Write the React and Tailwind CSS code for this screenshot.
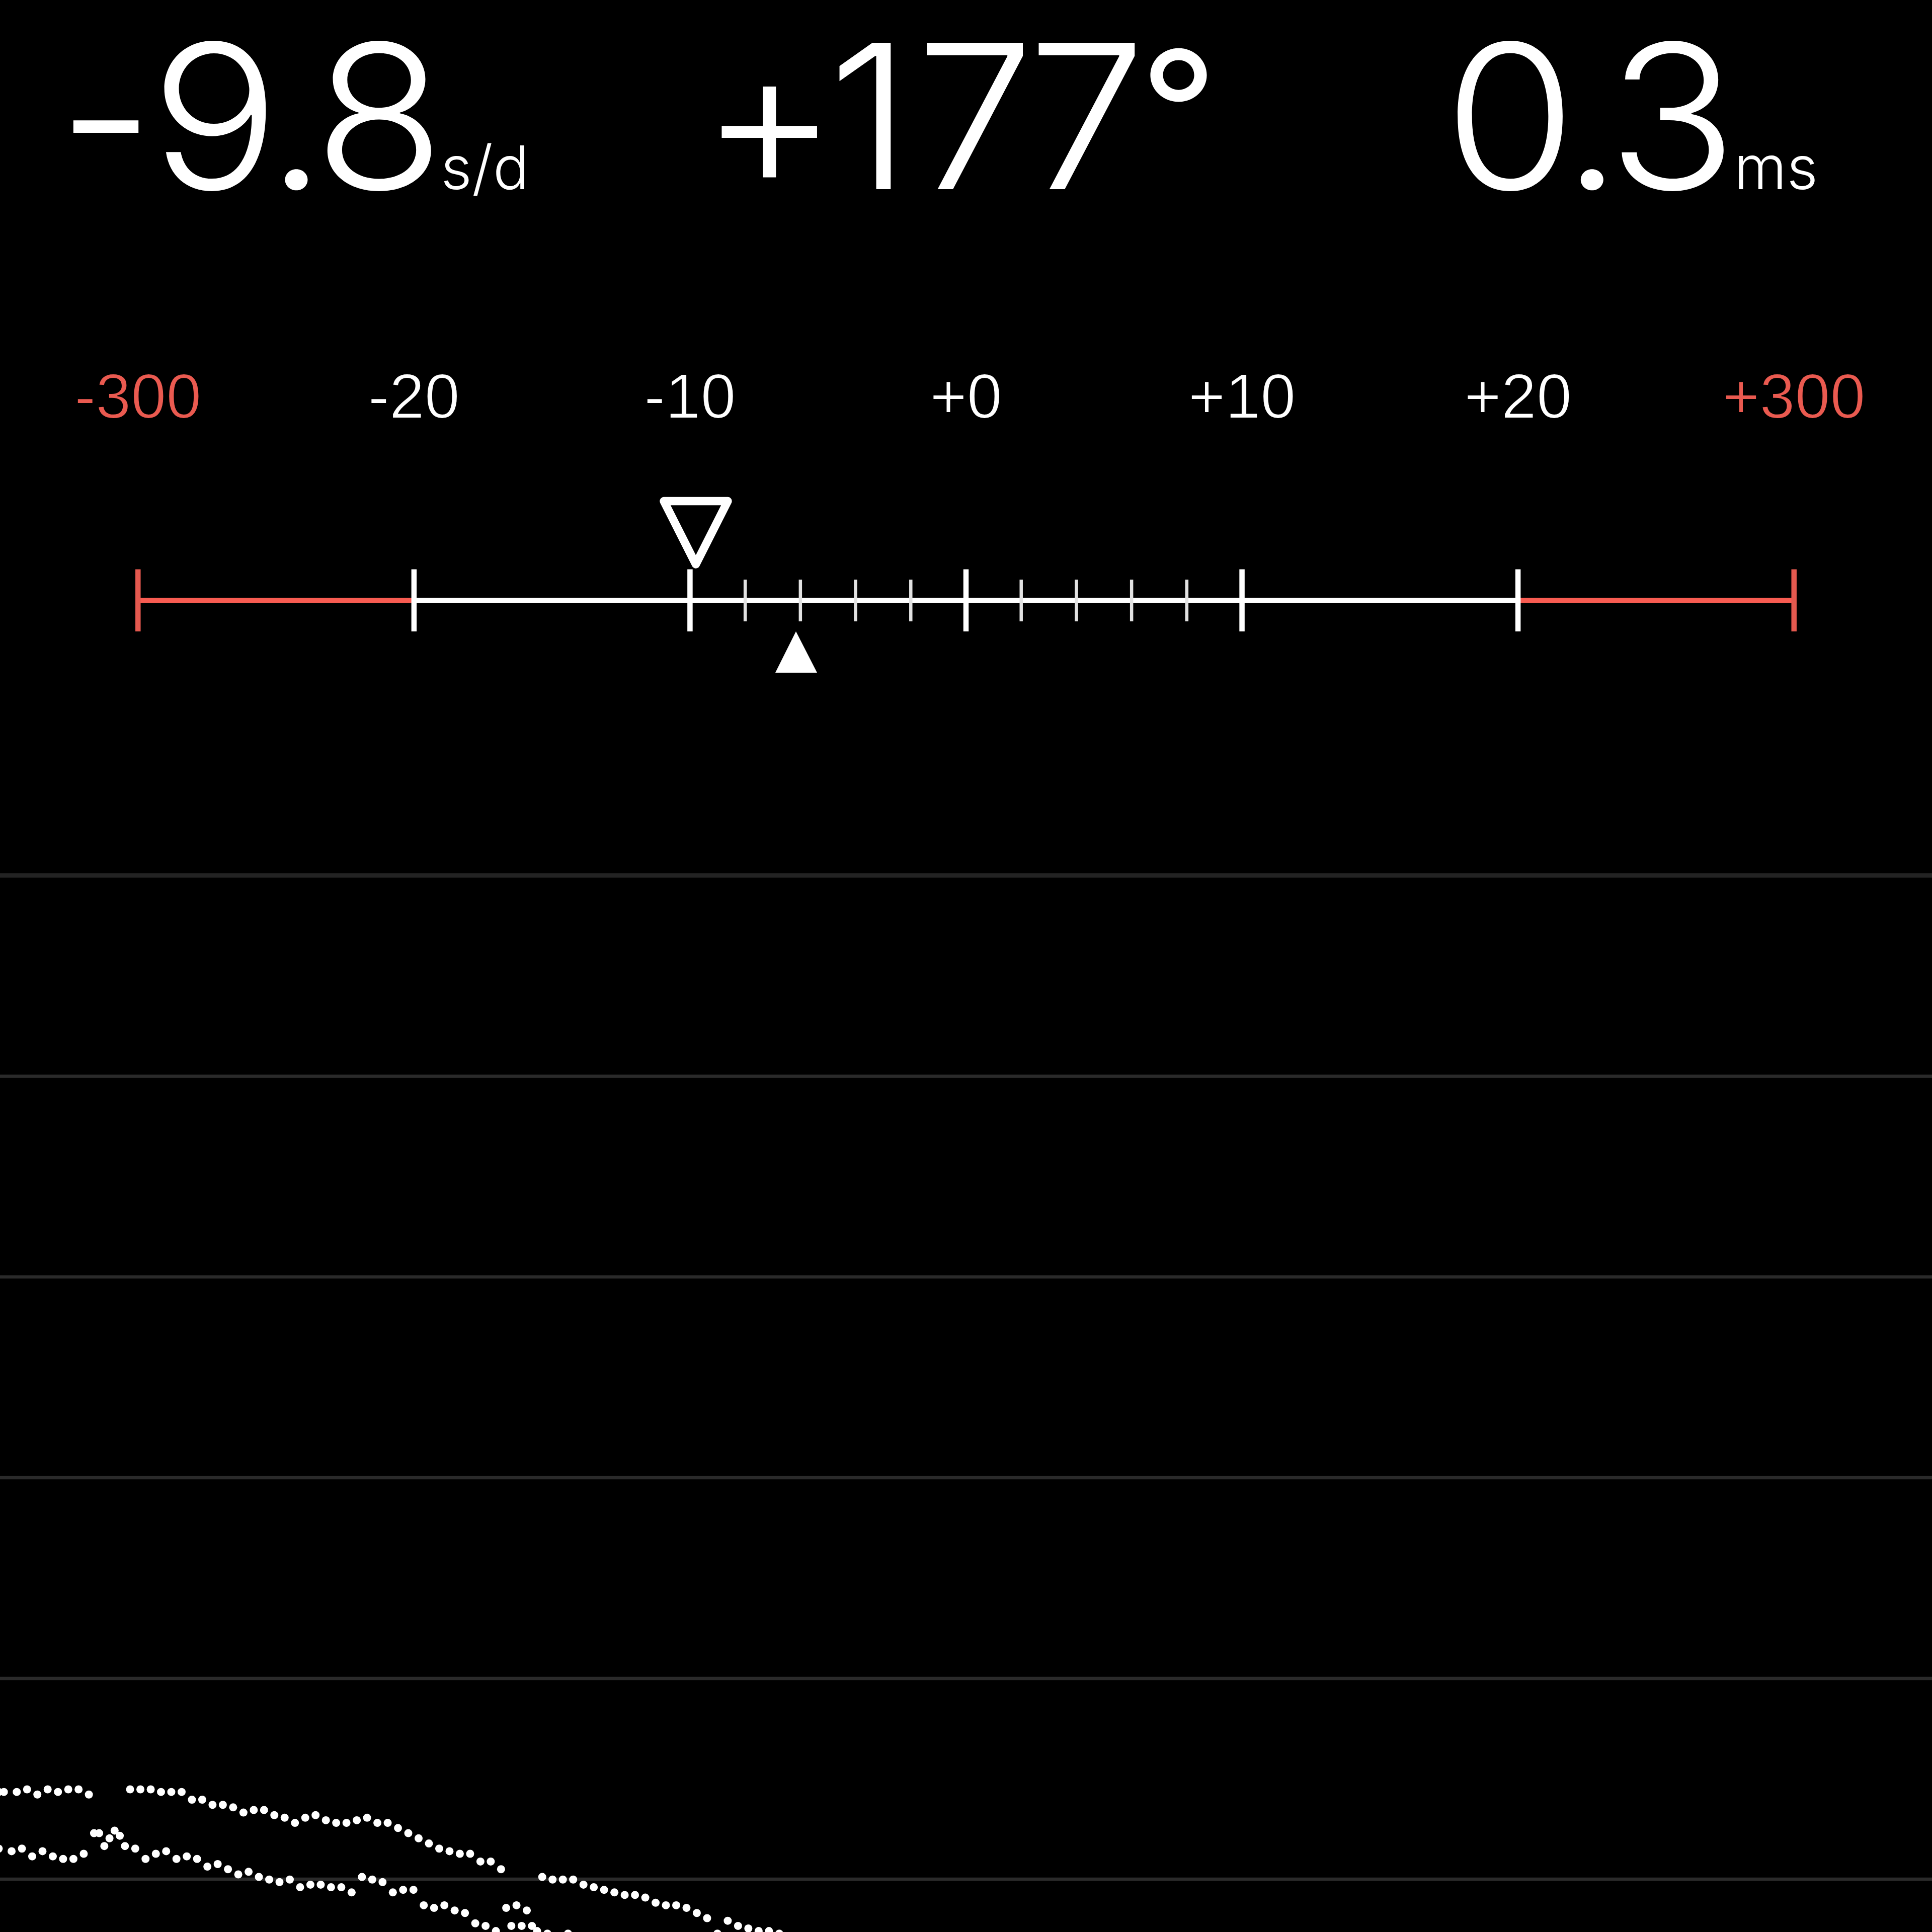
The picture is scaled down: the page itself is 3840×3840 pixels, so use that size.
import React from 'react';

// Values are split where the letter spacing changes
const READOUTS = [
  {
    id: 'rate',
    parts: [
      { text: '-', className: 'tracking-[-7px]' },
      { text: '9.8', className: 'tracking-[-15px]' },
    ],
    unit: 's/d',
    className: 'w-[1320px] pl-[114px]',
    valueClass: 'scale-x-[1.065]',
    unitClass: 'ml-[54px]',
  },
  {
    id: 'amplitude',
    parts: [
      { text: '+', className: 'tracking-[-20px]' },
      { text: '1', className: 'tracking-[9px]' },
      { text: '77', className: 'tracking-[-20px]' },
      { text: '°', className: 'text-[325px] leading-none font-normal align-[42px] ml-[8px]' },
    ],
    className: 'w-[1550px] pl-[72px]',
    valueClass: 'scale-x-[1.05]',
  },
  {
    id: 'beat',
    parts: [{ text: '0.3', className: 'tracking-[-17px]' }],
    unit: 'ms',
    className: 'w-[970px]',
    valueClass: 'scale-x-[1.065]',
    unitClass: 'ml-[46px]',
  },
];

const SCALE = [
  { label: '-300', limit: true },
  { label: '-20' },
  { label: '-10' },
  { label: '+0' },
  { label: '+10' },
  { label: '+20' },
  { label: '+300', limit: true },
];

// Distance between two major ticks
const STEP = 3840 / 7;
const RED = '#f85c52';

const GRID_LINES = [0, 1, 2, 3, 4, 5];

// Each run is [first x, step, list of y], counted in trace cells
const TRACE = [
  // tick
  [-0.5, 2, [12, 12]],
  [6.5, 4, [12, 11, 13, 11, 12, 11, 11, 13]],
  [50.5, 4, [11, 11, 11, 12, 12, 12, 15, 15, 17, 17, 18, 20, 19, 19, 21, 22, 24, 22, 21, 23, 24, 24, 23, 22, 24, 24, 26]],
  [158.5, 4, [28, 30, 32, 34, 35, 36, 36, 39, 39, 42]],
  [210.5, 4, [45, 46, 46, 46, 48, 49, 50, 51, 52, 52, 53, 55, 56, 56, 57, 59, 61, 67]],
  [282.5, 4, [62, 64, 65, 66, 66, 67]],
  // tock
  [-0.5, 5, [34]],
  [4.5, 4, [35, 34, 37, 35, 37, 38, 38, 36]],
  [36.5, 2, [28, 28, 33, 30, 27, 29, 33]],
  [52.5, 4, [34, 38, 36, 35, 38, 37, 38, 41, 40, 42, 44, 43, 45, 46, 47, 46, 49, 48, 48, 49, 49, 51]],
  [140.5, 4, [45, 46, 47, 51, 50, 50, 56, 57, 56, 58, 59, 63, 64, 66]],
  [196.5, 4, [57, 56, 58]],
  [198.5, 4, [64, 64, 64]],
  [208.5, 4, [66, 67]],
  [220.5, 4, [67]],
];

function Readout({ parts, unit, className, valueClass, unitClass }) {
  return (
    <div className={`flex items-baseline whitespace-nowrap ${className}`}>
      <span className={`inline-block origin-left text-[400px] leading-[460px] font-light [font-feature-settings:'calt'_0] ${valueClass}`}>
        {parts.map((part) => (
          <span key={part.text} className={part.className}>{part.text}</span>
        ))}
      </span>
      {unit && <span className={`text-[120px] leading-none font-light ${unitClass}`}>{unit}</span>}
    </div>
  );
}

function RateScale() {
  const center = (i) => STEP * (i + 0.5);
  const minor = [1, 2, 3, 4, 6, 7, 8, 9];

  return (
    <svg className="block w-[3840px] h-[400px]" viewBox="0 960 3840 400">
      {/* base line */}
      <path d={`M${center(0)} 1193.2H${center(1)}M${center(5)} 1193.2H${center(6)}`} stroke={RED} strokeWidth="10.5" />
      <path d={`M${center(1)} 1193.2H${center(5)}`} stroke="#fff" strokeWidth="10.5" />

      {minor.map((i) => (
        <path key={i} d={`M${center(2) + (i * STEP) / 5} 1152V1235`} stroke="#e2e2e2" strokeWidth="6.5" />
      ))}
      {SCALE.map((tick, i) => (
        <path key={tick.label} d={`M${center(i)} 1131.5V1255`} stroke={tick.limit ? '#e4594f' : '#fff'} strokeWidth="10.5" />
      ))}

      {/* current rate and running average */}
      <path d="M1319.5 996H1446.5L1383 1121.5Z" fill="none" stroke="#fff" strokeWidth="16.4" strokeLinejoin="round" />
      <path d="M1582 1255L1624 1337H1541Z" fill="#fff" />
    </svg>
  );
}

function TracePlot() {
  return (
    <svg className="block w-[3840px] h-[2480px]" viewBox="0 1360 3840 2480">
      {GRID_LINES.map((i) => (
        <path
          key={i}
          d={`M0 ${1740 + i * 399}H3840`}
          stroke={i === 0 ? '#232323' : '#2a2a2a'}
          strokeWidth={i === 0 ? 9 : 6.5}
        />
      ))}
      {TRACE.map(([start, step, rows]) =>
        rows.map((row, i) => (
          <circle key={`${start}-${i}-${row}`} cx={(start + i * step) * 5.12} cy={3500.2 + row * 5.12} r="8" fill="#fff" />
        ))
      )}
    </svg>
  );
}

export default function App() {
  return (
    <div className="w-[3840px] h-[3840px] bg-black text-white font-['Inter',sans-serif]">
      <header className="flex h-[700px]">
        {READOUTS.map((item) => (
          <Readout key={item.id} {...item} />
        ))}
      </header>

      <div className="grid grid-cols-7 h-[260px] pt-[16px] font-['Liberation_Sans',sans-serif] text-[126px] leading-[144px] text-center">
        {SCALE.map((tick) => (
          <span
            key={tick.label}
            className={`[-webkit-text-stroke:2px_black] ${tick.limit ? 'text-[#ea5a50]' : 'text-white'}`}
          >
            {tick.label}
          </span>
        ))}
      </div>

      <RateScale />
      <TracePlot />
    </div>
  );
}
